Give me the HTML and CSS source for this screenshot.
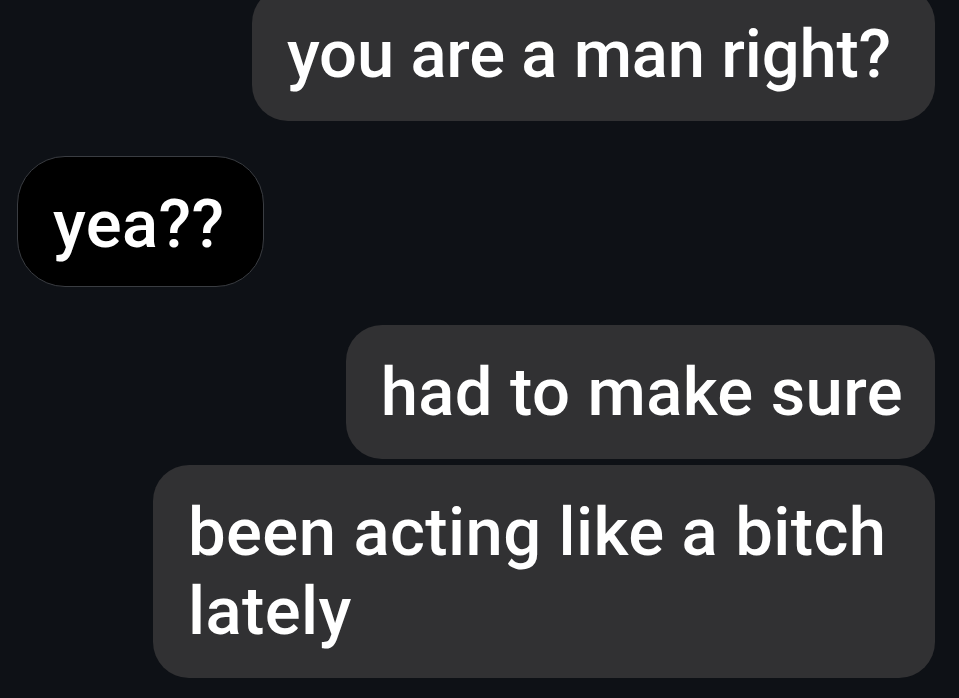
FILE: index.html
```html
<!DOCTYPE html>
<html lang="en">
<head>
<meta charset="utf-8">
<title>Chat</title>
<link rel="stylesheet" href="styles.css">
</head>
<body>
<main class="thread">
  <div class="bubble bubble--out bubble--first">you are a man right?</div>
  <div class="bubble bubble--in">yea??</div>
  <div class="bubble bubble--out bubble--third">had to make sure</div>
  <div class="bubble bubble--out bubble--last">been acting like a bitch lately</div>
</main>
</body>
</html>
```

FILE: styles.css
```css
html, body {
  margin: 0;
  padding: 0;
  background: #0e1116;
  height: 100%;
  overflow: hidden;
}

.thread {
  display: flex;
  flex-direction: column;
  align-items: flex-end;
  padding: 0 24px 0 17px;
}

.bubble {
  box-sizing: border-box;
  max-width: 782px;
  font-family: Roboto, "Liberation Sans", sans-serif;
  font-weight: 500;
  font-size: 67px;
  letter-spacing: 0.4px;
  line-height: 79px;
  color: #ffffff;
  padding: 28px 42px 27px 35px;
}

.bubble--out {
  background: #313133;
  border-radius: 36px;
}

.bubble--first {
  margin-top: -13px;
  padding-right: 44px;
  letter-spacing: -0.2px;
}

.bubble--in {
  align-self: flex-start;
  background: #000000;
  border: 1px solid #3a3d42;
  border-radius: 48px;
  margin-top: 35px;
  padding: 28px 38px 22px 35px;
}

.bubble--third {
  margin-top: 38px;
  padding-right: 32px;
}

.bubble--last {
  margin-top: 6px;
  width: 782px;
}
```
